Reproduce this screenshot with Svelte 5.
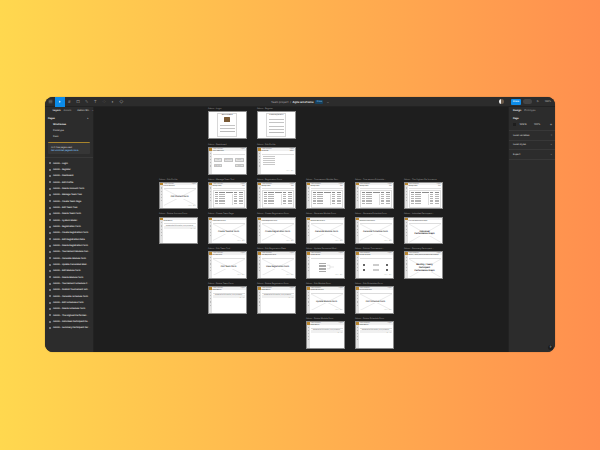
<script>
	const tools = ['#', '▢', '✎', 'T', '⁘', '◐', '◇'];

	const pages = ['Wireframes', 'Prototype', 'Docs'];

	const layers = [
		'Login', 'Register', 'Dashboard', 'Edit Profile', 'Delete Account Form', 'Manage Team Tool',
		'Create Team Page', 'Edit Team Tool', 'Delete Team Form', 'System Model', 'Registration Form',
		'Create Registration Form', 'Edit Registration Data', 'Delete Registration Form',
		'Tournament Module Gen...', 'Generate Module Form', 'Update Generated Mod...',
		'Edit Module Form', 'Delete Module Form', 'Tournament Schedule G...',
		'Publish Tournament Sch...', 'Generate Schedule Form', 'Edit Schedules Form',
		'Delete Schedule Form', 'The Highest Performan...', 'Individual Participant Pe...',
		'Summary Participant Per...'
	];

	// col and row are places on the 6 x 7 canvas grid
	const frames = [
		{ col: 2, row: 1, kind: 'login', label: 'Admin - Login' },
		{ col: 3, row: 1, kind: 'register', label: 'Admin - Register' },
		{ col: 2, row: 2, kind: 'dash', label: 'Admin - Dashboard' },
		{ col: 3, row: 2, kind: 'profile', label: 'Admin - Edit Profile' },
		{ col: 1, row: 3, kind: 'form', label: 'Admin - Edit Profile', title: 'Edit Student Form' },
		{ col: 2, row: 3, kind: 'table', label: 'Admin - Manage Team Tool' },
		{ col: 3, row: 3, kind: 'table', label: 'Admin - Registration Form' },
		{ col: 4, row: 3, kind: 'table', label: 'Admin - Tournament Module Gen...' },
		{ col: 5, row: 3, kind: 'table', label: 'Admin - Tournament Schedule...' },
		{ col: 6, row: 3, kind: 'table', label: 'Admin - The Highest Performance' },
		{ col: 1, row: 4, kind: 'notice', label: 'Admin - Delete Account Form' },
		{ col: 2, row: 4, kind: 'form', label: 'Admin - Create Team Page', title: 'Create Teacher Form' },
		{ col: 3, row: 4, kind: 'form', label: 'Admin - Create Registration Form', title: 'Create Registration Form' },
		{ col: 4, row: 4, kind: 'form', label: 'Admin - Generate Module Form', title: 'Generate Module Form' },
		{ col: 5, row: 4, kind: 'form', label: 'Admin - Generate Schedule Form', title: 'Generate Schedule Form' },
		{ col: 6, row: 4, kind: 'graph', label: 'Admin - Individual Participant...', title: 'Individual Performance Graph' },
		{ col: 2, row: 5, kind: 'form', label: 'Admin - Edit Team Tool', title: 'Edit Team Form' },
		{ col: 3, row: 5, kind: 'form', label: 'Admin - Edit Registration Data', title: 'View Registration Form' },
		{ col: 4, row: 5, kind: 'tree', label: 'Admin - Update Generated Mod...' },
		{ col: 5, row: 5, kind: 'icons', label: 'Admin - Publish Tournament...' },
		{ col: 6, row: 5, kind: 'graph', label: 'Admin - Summary Participant...', title: 'Monthly / Yearly Participant Performance Graph' },
		{ col: 2, row: 6, kind: 'notice', label: 'Admin - Delete Team Form' },
		{ col: 3, row: 6, kind: 'notice', label: 'Admin - Delete Registration Form' },
		{ col: 4, row: 6, kind: 'form', label: 'Admin - Edit Module Form', title: 'Update Module Form' },
		{ col: 5, row: 6, kind: 'form', label: 'Admin - Edit Schedules Form', title: 'Edit Schedule Form' },
		{ col: 4, row: 7, kind: 'notice', label: 'Admin - Delete Module Form' },
		{ col: 5, row: 7, kind: 'notice', label: 'Admin - Delete Schedule Form' }
	];

	const tableRows = [1, 2, 3, 4, 5, 6];
	const nav = [1, 2, 3, 4, 5];
</script>

<main class="page">
	<div class="window">
		<header class="toolbar">
			<div class="tools">
				<span class="menu">
					<svg viewBox="0 0 8 8" width="5" height="5"><path d="M1 2h6M1 4h6M1 6h6" stroke="#999" stroke-width="0.7" /></svg>
				</span>
				<span class="move">
					<svg viewBox="0 0 8 8" width="4" height="4"><path d="M2 1l4 3-2 .4-.8 2z" fill="#fff" /></svg>
				</span>
				{#each tools as tool}
					<span class="tool">{tool}</span>
				{/each}
			</div>
			<div class="title">
				<span class="project">Team project</span>
				<span class="slash">/</span>
				<b>Agile wireframe</b>
				<span class="free">Free</span>
				<span class="caret">⌄</span>
			</div>
			<div class="actions">
				<span class="avatar"></span>
				<span class="share">Share</span>
				<span class="play"></span>
				<span class="zoom">▷</span>
				<span class="zoom">100%</span>
			</div>
		</header>

		<div class="body">
			<aside class="left">
				<div class="tabs">
					<span class="on">Layers</span>
					<span>Assets</span>
					<span class="file">Admin Wo... ⌄</span>
				</div>
				<div class="pages-head"><b>Pages</b><span>+</span></div>
				<ul class="pages">
					{#each pages as page, i}
						<li class:on={i === 0}>{page}</li>
					{/each}
				</ul>
				<div class="upsell">
					<p>All 3 free pages used</p>
					<p class="link">Get unlimited pages &amp; more</p>
				</div>
				<ul class="layers">
					{#each layers as layer}
						<li><i></i><span>Admin - {layer}</span></li>
					{/each}
				</ul>
			</aside>

			<section class="canvas">
				<div class="grid">
					{#each frames as f}
						<div class="cell" style="grid-column: {f.col}; grid-row: {f.row}">
							<div class="label">{f.label}</div>
							<div class="frame">
								{#if f.kind === 'login' || f.kind === 'register'}
									<div class="auth">
										<div class="card">
											<b>{f.kind === 'login' ? 'Welcome Back' : 'Create Registration'}</b>
											{#if f.kind === 'login'}
												<span class="logo"></span>
											{/if}
											<span class="input"></span>
											<span class="input"></span>
											{#if f.kind === 'register'}
												<span class="input"></span>
												<span class="input"></span>
											{/if}
											<span class="input dark"></span>
										</div>
									</div>
								{:else}
									<div class="bar"><i></i><span>Admin Dashboard</span><em>Logout</em></div>
									<div class="app">
										<div class="rail">
											{#each nav as n}<u></u>{/each}
										</div>
										<div class="content">
											{#if f.kind === 'dash'}
												<div class="crumb">Admin Dashboard</div>
												<div class="btns">
													<span>Team</span><span>Registration</span><span>Module</span><span>Schedule</span><span>Graph</span>
												</div>
											{:else if f.kind === 'profile'}
												<div class="crumb">Edit Profile <em>Admin</em></div>
												<div class="lines">
													<s></s><s></s><s></s><s></s><s></s>
												</div>
												<div class="foot"><span>Cancel</span><span>Save</span></div>
											{:else if f.kind === 'table'}
												<div class="crumb">Manage Team <em>Add</em></div>
												<div class="table">
													<div class="tr th"><s></s><s></s><s></s><s></s><s></s></div>
													{#each tableRows as r}
														<div class="tr"><s></s><s></s><s class="blank"></s><s></s><s></s></div>
													{/each}
												</div>
											{:else if f.kind === 'form' || f.kind === 'graph'}
												<div class="crumb">{f.title}</div>
												<div class="placeholder">
													<svg class="cross" viewBox="0 0 100 100" preserveAspectRatio="none">
														<path d="M0 0L100 100M100 0L0 100" stroke="#dedede" stroke-width="0.6" vector-effect="non-scaling-stroke" />
													</svg>
													<b class:big={f.kind === 'graph'}>{f.title}</b>
												</div>
												{#if f.kind === 'form'}
													<div class="foot"><span>Cancel</span><span>Save</span></div>
												{/if}
											{:else if f.kind === 'notice'}
												<div class="crumb">Delete Record</div>
												<div class="notice">Delete this information, are you sure?</div>
												<div class="foot"><span>No</span><span>Yes</span></div>
											{:else if f.kind === 'tree'}
												<div class="crumb">Update Module</div>
												<div class="tree">
													<div class="lines short"><s></s><s></s><s></s><s></s><s></s><s></s></div>
													<svg viewBox="0 0 12 12" width="7" height="10"><path d="M0 3h5v6H0M5 6h7" fill="none" stroke="#aaa" stroke-width="0.5" /></svg>
												</div>
												<div class="foot"><span>Cancel</span><span>Save</span></div>
											{:else if f.kind === 'icons'}
												<div class="crumb">Publish Schedule</div>
												<div class="icons">
													<i></i><s></s><i></i><i></i><s></s><i></i>
												</div>
												<div class="foot"><span>Cancel</span><span>Save</span></div>
											{/if}
										</div>
									</div>
								{/if}
							</div>
						</div>
					{/each}
				</div>
			</section>

			<aside class="right">
				<div class="tabs">
					<span class="on">Design</span>
					<span>Prototype</span>
				</div>
				<div class="sect page-sect">
					<b>Page</b>
					<div class="fill">
						<i></i><span>1E1E1E</span><span>100%</span><em>◉</em>
					</div>
				</div>
				<div class="sect row"><span>Local variables</span><em>≡</em></div>
				<div class="sect row"><span>Local styles</span><em>+</em></div>
				<div class="sect row"><span>Export</span><em>+</em></div>
				<span class="help">?</span>
			</aside>
		</div>
	</div>
</main>

<style>
	:global(body) {
		margin: 0;
		font-family: Inter, 'Liberation Sans', sans-serif;
		text-rendering: geometricPrecision;
	}
	.page {
		width: 600px;
		height: 450px;
		box-sizing: border-box;
		padding-bottom: 1px;
		display: flex;
		align-items: center;
		justify-content: center;
		background: linear-gradient(90deg, #ffd84f, #ff8f4f);
	}
	.window {
		width: 510px;
		height: 255px;
		border-radius: 8px;
		overflow: hidden;
		display: flex;
		flex-direction: column;
		background: #2c2c2c;
		color: #ddd;
		box-shadow: 0 0 1px rgba(0, 0, 0, 0.5);
	}

	.toolbar {
		height: 10px;
		flex: none;
		box-sizing: border-box;
		display: flex;
		align-items: center;
		justify-content: space-between;
		background: #2c2c2c;
		border-bottom: 0.5px solid #222;
		font-size: 2.8px;
	}
	.tools {
		width: 200px;
		display: flex;
		align-items: center;
		height: 100%;
	}
	.menu {
		width: 10px;
		display: flex;
		justify-content: center;
	}
	.move {
		width: 10px;
		height: 10px;
		background: #0c8ce9;
		display: flex;
		align-items: center;
		justify-content: center;
	}
	.tool {
		width: 8.7px;
		text-align: center;
		color: #999;
		font-size: 4px;
	}
	.title {
		display: flex;
		align-items: center;
		gap: 1.5px;
		color: #a0a0a0;
		font-weight: 500;
	}
	.title b {
		color: #eee;
		font-weight: 600;
	}
	.free {
		background: #17425f;
		color: #7cc4f8;
		padding: 0.5px 1.5px;
		border-radius: 1px;
		font-size: 2.4px;
	}
	.caret {
		margin-left: 2px;
	}
	.actions {
		width: 200px;
		display: flex;
		align-items: center;
		justify-content: flex-end;
		gap: 2px;
		padding-right: 3px;
		box-sizing: border-box;
	}
	.avatar {
		width: 5px;
		height: 5px;
		border-radius: 50%;
		background: linear-gradient(90deg, #eee 50%, #6b5a4a 50%);
		margin-right: 4.5px;
	}
	.share {
		width: 10px;
		height: 6px;
		line-height: 6px;
		text-align: center;
		background: #0c8ce9;
		color: #fff;
		border-radius: 1px;
		font-size: 2.3px;
		font-weight: 500;
	}
	.play {
		width: 9px;
		height: 5px;
		border-radius: 3px;
		background: #444;
	}
	.zoom {
		width: 8px;
		text-align: center;
		color: #aaa;
		font-size: 2.4px;
		font-weight: 500;
	}

	.body {
		flex: 1;
		min-height: 0;
		display: flex;
	}

	.left {
		width: 48.5px;
		flex: none;
		background: #2c2c2c;
		border-right: 0.5px solid #222;
		box-sizing: border-box;
		font-size: 2.3px;
		font-weight: 500;
		color: #ccc;
	}
	.tabs {
		height: 7.5px;
		box-sizing: border-box;
		display: flex;
		align-items: center;
		gap: 3px;
		padding-left: 4px;
		color: #a0a0a0;
		font-size: 2.4px;
		font-weight: 500;
		white-space: nowrap;
	}
	.tabs .on {
		color: #eee;
		font-weight: 700;
	}
	.left .tabs {
		padding-left: 7.7px;
	}
	.left .file {
		margin-left: 3px;
		color: #ccc;
	}
	.pages-head {
		display: flex;
		justify-content: space-between;
		align-items: center;
		padding: 0 4px 0 3px;
		height: 7px;
		box-sizing: border-box;
		color: #eee;
	}
	.pages-head b {
		font-weight: 700;
	}
	ul {
		list-style: none;
		margin: 0;
		padding: 0;
	}
	.pages li {
		height: 6.4px;
		line-height: 6.4px;
		padding-left: 8px;
		color: #ccc;
	}
	.pages li.on {
		color: #eee;
		font-weight: 700;
	}
	.upsell {
		margin: 1.7px 3px 0;
		height: 12px;
		box-sizing: border-box;
		padding: 2.3px 0 0 3px;
		border-top: 1px solid #a8842c;
		background: #363636;
		border-radius: 1px;
		font-size: 2.1px;
		white-space: nowrap;
	}
	.upsell p {
		margin: 0;
		color: #ccc;
		line-height: 3.6px;
	}
	.upsell .link {
		color: #7cc4f8;
	}
	.layers {
		margin-top: 2.5px;
		padding-top: 2.3px;
		border-top: 0.5px solid #383838;
	}
	.layers li {
		height: 6.33px;
		display: flex;
		align-items: center;
		gap: 2.5px;
		padding-left: 3.5px;
		color: #e4e4e4;
		white-space: nowrap;
		font-size: 2.2px;
		font-weight: 600;
	}
	.layers li i {
		flex: none;
		width: 2px;
		height: 2px;
		border: 0.4px solid #777;
		box-sizing: border-box;
	}

	.canvas {
		flex: 1;
		min-width: 0;
		background: #1e1e1e;
		padding: 0.8px 0 0 65.5px;
		overflow: hidden;
	}
	.grid {
		display: grid;
		grid-template-columns: repeat(6, 38.6px);
		grid-template-rows: 32.2px;
		grid-auto-rows: 31px;
		column-gap: 10.4px;
		row-gap: 3.8px;
	}
	.cell {
		display: flex;
		flex-direction: column;
		min-width: 0;
	}
	.label {
		height: 3.2px;
		line-height: 3.2px;
		font-size: 2px;
		font-weight: 500;
		color: #9a9a9a;
		white-space: nowrap;
	}
	.frame {
		height: 27.6px;
		box-sizing: border-box;
		background: #fff;
		border: 0.7px solid #8c8c8c;
		color: #555;
		display: flex;
		flex-direction: column;
		overflow: hidden;
		font-size: 1.5px;
	}
	.auth {
		flex: 1;
		display: flex;
		justify-content: center;
		padding: 1px;
	}
	.card {
		width: 20px;
		border: 0.6px solid #d8d8d8;
		box-sizing: border-box;
		display: flex;
		flex-direction: column;
		align-items: center;
		gap: 0.8px;
		padding-top: 1.5px;
		font-size: 1.5px;
		white-space: nowrap;
	}
	.card b {
		font-weight: 700;
		color: #444;
	}
	.logo {
		width: 6px;
		height: 5px;
		background: #7a5a35;
		border-radius: 0.5px;
	}
	.input {
		width: 15px;
		height: 1.6px;
		border-bottom: 0.4px solid #c4c4c4;
		box-sizing: border-box;
		margin-top: 1px;
	}
	.input.dark {
		background: #bbb;
		border: none;
		height: 1.2px;
	}
	.bar {
		height: 2.6px;
		flex: none;
		display: flex;
		align-items: center;
		gap: 1px;
		background: #f0f0f0;
		font-size: 1.2px;
		font-weight: 500;
		color: #666;
		white-space: nowrap;
	}
	.bar i {
		width: 2.6px;
		height: 2.6px;
		background: #b8862f;
	}
	.bar em {
		margin-left: auto;
		font-style: normal;
		padding-right: 1px;
	}
	.app {
		flex: 1;
		min-height: 0;
		display: flex;
	}
	.rail {
		width: 2.6px;
		flex: none;
		background: #e2e2e2;
		display: flex;
		flex-direction: column;
		align-items: center;
		gap: 2px;
		padding-top: 2px;
		box-sizing: border-box;
	}
	.rail u {
		width: 1.2px;
		height: 1.2px;
		background: #bbb;
	}
	.content {
		flex: 1;
		min-width: 0;
		display: flex;
		flex-direction: column;
		padding: 0.5px 1px;
		box-sizing: border-box;
	}
	.crumb {
		display: flex;
		justify-content: space-between;
		flex: none;
		height: 2.6px;
		line-height: 2.6px;
		font-size: 1.3px;
		color: #444;
		font-weight: 600;
		border-bottom: 0.3px solid #ddd;
		white-space: nowrap;
	}
	.crumb em {
		font-style: normal;
		font-weight: 400;
	}
	.btns {
		display: flex;
		flex-wrap: wrap;
		gap: 2px;
		padding: 3.5px 1px;
		justify-content: space-between;
	}
	.btns span {
		width: 8.5px;
		height: 3.5px;
		line-height: 3.5px;
		text-align: center;
		background: #e4e4e4;
		border: 0.3px solid #c4c4c4;
		border-radius: 0.5px;
		font-size: 1.1px;
		box-sizing: border-box;
		white-space: nowrap;
	}
	.lines {
		display: flex;
		flex-direction: column;
		gap: 1.2px;
		padding: 1.5px 1px;
		flex: 1;
	}
	.lines s {
		display: block;
		width: 12px;
		height: 0.7px;
		background: #c8c8c8;
	}
	.lines.short {
		flex: none;
		gap: 0.9px;
		padding: 0;
	}
	.lines.short s {
		width: 7px;
		height: 0.6px;
		background: #aaa;
	}
	.foot {
		display: flex;
		justify-content: flex-end;
		flex: none;
		gap: 1.5px;
		font-size: 1.1px;
		height: 2px;
		line-height: 2px;
		color: #666;
	}
	.table {
		flex: 1;
		margin-top: 1px;
		border: 0.3px solid #ddd;
		display: flex;
		flex-direction: column;
		gap: 0.7px;
		padding: 1px;
		box-sizing: border-box;
		overflow: hidden;
	}
	.tr {
		display: grid;
		grid-template-columns: 3px 6px 1fr 3px 4px;
		gap: 1.2px;
		height: 1.1px;
	}
	.tr s {
		display: block;
		background: #b4b4b4;
		height: 0.7px;
	}
	.tr s.blank {
		background: none;
		border-right: 0.3px solid #ddd;
		height: 2px;
	}
	.tr.th s {
		background: #8c8c8c;
	}
	.placeholder {
		position: relative;
		flex: 1;
		display: flex;
		align-items: center;
		justify-content: center;
		min-height: 0;
		text-align: center;
	}
	.cross {
		position: absolute;
		inset: 0;
		width: 100%;
		height: 100%;
	}
	.placeholder b {
		position: relative;
		background: #fff;
		font-size: 2.1px;
		font-weight: 600;
		line-height: 2.6px;
		color: #333;
		padding: 0 0.5px;
	}
	.placeholder b.big {
		width: 22px;
		font-weight: 700;
		color: #222;
	}
	.notice {
		margin-top: 1.5px;
		height: 2.8px;
		line-height: 2.8px;
		background: #f0f0f0;
		font-size: 1.5px;
		font-weight: 600;
		text-align: center;
		white-space: nowrap;
		color: #555;
	}
	.tree {
		flex: 1;
		display: flex;
		align-items: center;
		justify-content: center;
		gap: 0.5px;
	}
	.icons {
		flex: 1;
		display: grid;
		grid-template-columns: 3px 8px 3px;
		grid-auto-rows: 5px;
		justify-content: space-around;
		align-content: center;
		align-items: center;
		justify-items: center;
	}
	.icons i {
		width: 1.8px;
		height: 1.8px;
		background: #666;
	}
	.icons s {
		display: block;
		width: 6px;
		height: 1.6px;
		background: #ccc;
	}

	.right {
		position: relative;
		width: 47px;
		flex: none;
		background: #2c2c2c;
		border-left: 0.5px solid #222;
		box-sizing: border-box;
		font-size: 2.3px;
		font-weight: 500;
		color: #ccc;
	}
	.sect {
		padding: 0 3px 0 4px;
		box-sizing: border-box;
	}
	.page-sect {
		height: 16.5px;
		padding-top: 2.5px;
		border-bottom: 0.5px solid #383838;
	}
	.page-sect b {
		font-weight: 700;
		color: #eee;
	}
	.fill {
		display: flex;
		align-items: center;
		margin-top: 3.2px;
		gap: 3.5px;
	}
	.fill i {
		width: 3px;
		height: 3px;
		background: #1e1e1e;
	}
	.fill span:nth-of-type(2) {
		margin-left: 4px;
	}
	.fill em,
	.row em {
		margin-left: auto;
		font-style: normal;
		color: #999;
	}
	.row {
		height: 9.5px;
		display: flex;
		align-items: center;
		border-bottom: 0.5px solid #383838;
	}
	.help {
		position: absolute;
		right: 2px;
		bottom: 2px;
		width: 5px;
		height: 5px;
		line-height: 5px;
		border-radius: 50%;
		background: #1e1e1e;
		text-align: center;
		font-size: 3px;
		color: #ccc;
	}
</style>
